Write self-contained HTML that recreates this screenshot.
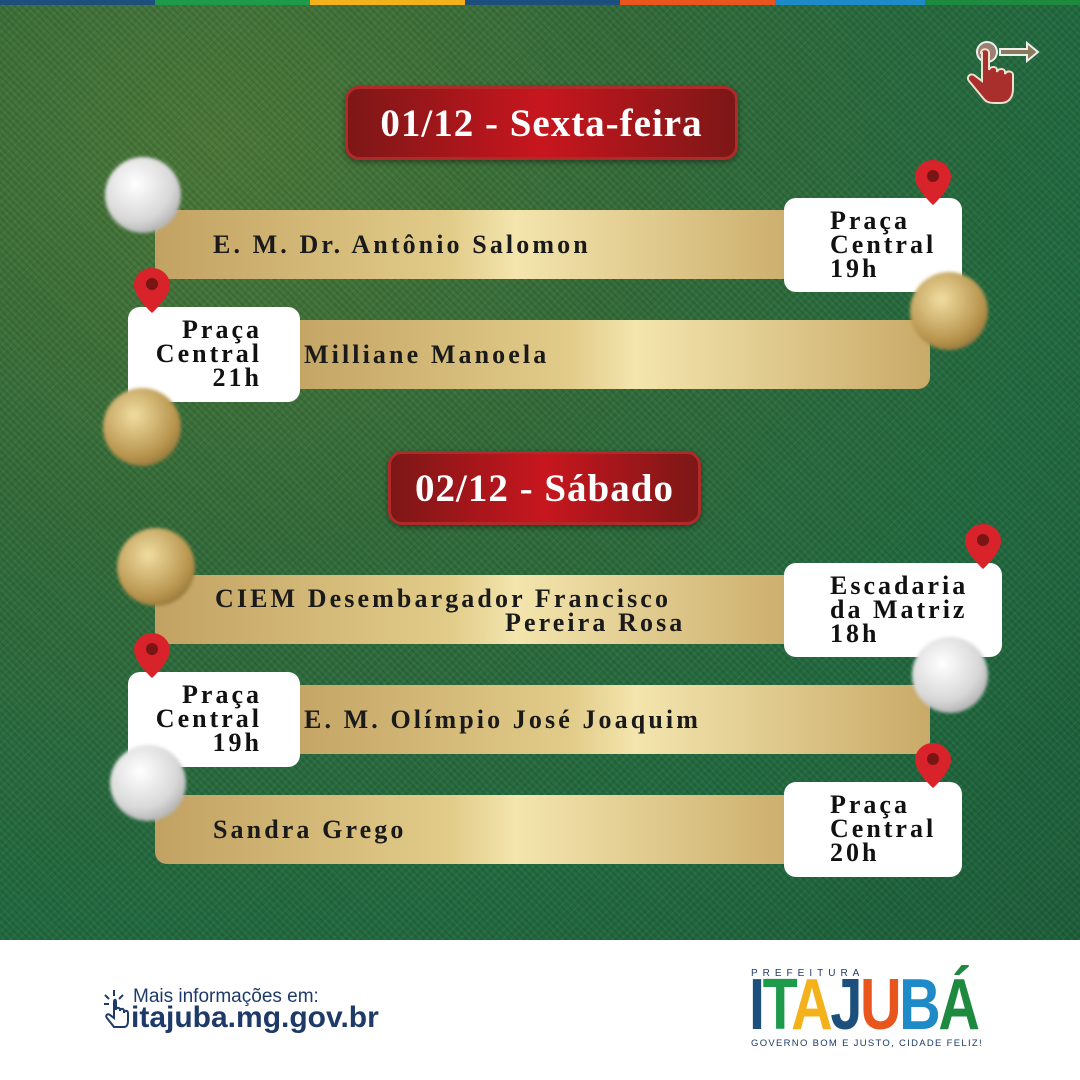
<!DOCTYPE html>
<html><head><meta charset="utf-8"><style>
*{margin:0;padding:0;box-sizing:border-box}
body{width:1080px;height:1080px;position:relative;overflow:hidden;font-family:"Liberation Serif",serif}
.bg{position:absolute;left:0;top:0;width:1080px;height:940px;background:radial-gradient(ellipse at 20% 15%,#4b7838 0,#346c3a 35%,#226a40 70%,#1d5f39 100%)}
.tex{position:absolute;left:0;top:0;width:1080px;height:940px;background:repeating-linear-gradient(45deg,rgba(0,0,0,.1) 0 2px,transparent 2px 5px),repeating-linear-gradient(-45deg,rgba(255,255,255,.04) 0 2px,transparent 2px 6px)}
.stripe{position:absolute;top:0;height:5px}
.bar{position:absolute;height:69px;border-radius:12px;background:linear-gradient(90deg,#c2a262,#e2cc8a 45%,#f3e5ad 55%,#c9aa68);font-weight:bold;font-size:26px;letter-spacing:3.1px;color:#1a1a1a;display:flex;align-items:center}
.box{position:absolute;background:#fff;border-radius:12px;font-weight:bold;font-size:26px;letter-spacing:3px;line-height:24px;color:#111;padding-top:11px;z-index:2}
.hdr{position:absolute;height:74px;border-radius:14px;background:linear-gradient(90deg,#7d1717,#c8161e 50%,#7d1717);border:3px solid #b02a2a;color:#fff;font-weight:bold;font-size:39px;letter-spacing:1px;display:flex;align-items:center;justify-content:center;box-shadow:0 2px 6px rgba(0,0,0,.4)}
.orn{position:absolute;width:78px;height:78px;border-radius:50%;filter:blur(1.5px);z-index:3}
.g{background:radial-gradient(circle at 40% 35%,#f0dca0,#b8954e 60%,#6d5526)}
.s{background:radial-gradient(circle at 40% 35%,#fff,#d8d8d8 55%,#8a8a8a)}
svg.p{z-index:4}
</style></head><body>
<div class="bg"></div><div class="tex"></div>
<div class="stripe" style="left:0;width:155px;background:#1d4f7d"></div>
<div class="stripe" style="left:155px;width:155px;background:#1d9a4a"></div>
<div class="stripe" style="left:310px;width:155px;background:#f3b21b"></div>
<div class="stripe" style="left:465px;width:155px;background:#1d4f7d"></div>
<div class="stripe" style="left:620px;width:155px;background:#e8561e"></div>
<div class="stripe" style="left:775px;width:150px;background:#1f8ac8"></div>
<div class="stripe" style="left:925px;width:155px;background:#1d8a40"></div>

<svg style="position:absolute;left:960px;top:35px" width="85" height="75" viewBox="0 0 85 75">
<circle cx="27" cy="17" r="10" fill="#9a8070" stroke="#eee" stroke-width="2"/>
<path d="M40 14h27v-6l11 9-11 9v-6h-27z" fill="#8a7a5c" stroke="#eee" stroke-width="2"/>
<path d="M22 18v28l-8-6c-4-2-8 2-5 6l14 17c3 4 6 5 12 5h6c8 0 12-6 12-14v-14c0-4-6-5-8-1v-2c0-4-7-4-8 0v-2c0-4-7-4-8 0v-17c0-5-8-5-8 0z" fill="#a82f2c" stroke="#f0e0d0" stroke-width="2"/>
</svg>

<div class="hdr" style="left:345px;top:86px;width:393px">01/12 - Sexta-feira</div>
<div class="hdr" style="left:388px;top:451px;width:313px">02/12 - Sábado</div>

<div class="bar" style="left:155px;top:210px;width:657px;padding-left:58px">E. M. Dr. Antônio Salomon</div>
<div class="box" style="left:784px;top:198px;width:178px;height:94px;padding-left:46px">Praça<br>Central<br>19h</div>

<div class="bar" style="left:277px;top:320px;width:653px;padding-left:27px">Milliane Manoela</div>
<div class="box" style="left:128px;top:307px;width:172px;height:95px;text-align:right;padding-right:38px">Praça<br>Central<br>21h</div>

<div class="bar" style="left:155px;top:575px;width:657px;padding-left:60px;line-height:24px"><div style="margin-top:2px">CIEM Desembargador Francisco<br><span style="padding-left:290px">Pereira Rosa</span></div></div>
<div class="box" style="left:784px;top:563px;width:218px;height:94px;padding-left:46px">Escadaria<br>da Matriz<br>18h</div>

<div class="bar" style="left:277px;top:685px;width:653px;padding-left:27px">E. M. Olímpio José Joaquim</div>
<div class="box" style="left:128px;top:672px;width:172px;height:95px;text-align:right;padding-right:38px">Praça<br>Central<br>19h</div>

<div class="bar" style="left:155px;top:795px;width:657px;padding-left:58px">Sandra Grego</div>
<div class="box" style="left:784px;top:782px;width:178px;height:95px;padding-left:46px">Praça<br>Central<br>20h</div>

<div class="orn s" style="left:105px;top:157px;width:76px;height:76px"></div>
<div class="orn g" style="left:910px;top:272px"></div>
<div class="orn g" style="left:103px;top:388px"></div>
<div class="orn g" style="left:117px;top:528px"></div>
<div class="orn s" style="left:912px;top:637px;width:76px;height:76px"></div>
<div class="orn s" style="left:110px;top:745px;width:76px;height:76px"></div>

<svg width="0" height="0" style="position:absolute"><defs><g id="pin"><path d="M18 0C8 0 0 8 0 17c0 12 18 28 18 28s18-16 18-28C36 8 28 0 18 0z" fill="#d9232a"/><circle cx="18" cy="16" r="6" fill="#7a1515"/></g></defs></svg>
<svg class="p" style="position:absolute;left:915px;top:160px" width="36" height="46"><use href="#pin"/></svg>
<svg class="p" style="position:absolute;left:134px;top:268px" width="36" height="46"><use href="#pin"/></svg>
<svg class="p" style="position:absolute;left:965px;top:524px" width="36" height="46"><use href="#pin"/></svg>
<svg class="p" style="position:absolute;left:134px;top:633px" width="36" height="46"><use href="#pin"/></svg>
<svg class="p" style="position:absolute;left:915px;top:743px" width="36" height="46"><use href="#pin"/></svg>

<div style="position:absolute;left:0;top:940px;width:1080px;height:140px;background:#fff"></div>
<svg style="position:absolute;left:102px;top:988px" width="28" height="42" viewBox="0 0 28 42"><g stroke="#1e3a68" stroke-width="2" fill="none"><path d="M12 2v6M3 7l4 4M21 7l-4 4M2 16h5"/><path d="M12 14v16l-4-3c-3-2-5 1-3 3l7 9h10c3 0 4-3 4-6v-8c0-3-4-3-4 0v-2c0-3-4-3-4 0v-1c0-3-4-3-4 0v-8c0-3-2-3-2 0z"/></g></svg>
<div style="position:absolute;left:133px;top:986px;font-family:'Liberation Sans',sans-serif;font-size:19px;color:#1e3a68">Mais informações em:</div>
<div style="position:absolute;left:131px;top:1001px;font-family:'Liberation Sans',sans-serif;font-size:30px;font-weight:bold;color:#1e3a68">itajuba.mg.gov.br</div>

<div style="position:absolute;left:751px;top:968px;font-family:'Liberation Sans',sans-serif;font-size:10px;letter-spacing:5px;color:#1e3a68">PREFEITURA</div>
<div style="position:absolute;left:749px;top:972px;font-family:'Liberation Sans',sans-serif;font-size:72px;font-weight:bold;letter-spacing:-3px;line-height:66px;transform:scaleX(.8);transform-origin:0 0;white-space:nowrap"><span style="color:#1d4f7d">I</span><span style="color:#1d9a4a">T</span><span style="color:#f3b21b">A</span><span style="color:#1d4f7d">J</span><span style="color:#e8561e">U</span><span style="color:#1f8ac8">B</span><span style="color:#1d8a40">Á</span></div>
<div style="position:absolute;left:751px;top:1038px;font-family:'Liberation Sans',sans-serif;font-size:9.5px;letter-spacing:1.3px;color:#1e3a68">GOVERNO BOM E JUSTO, CIDADE FELIZ!</div>
</body></html>
